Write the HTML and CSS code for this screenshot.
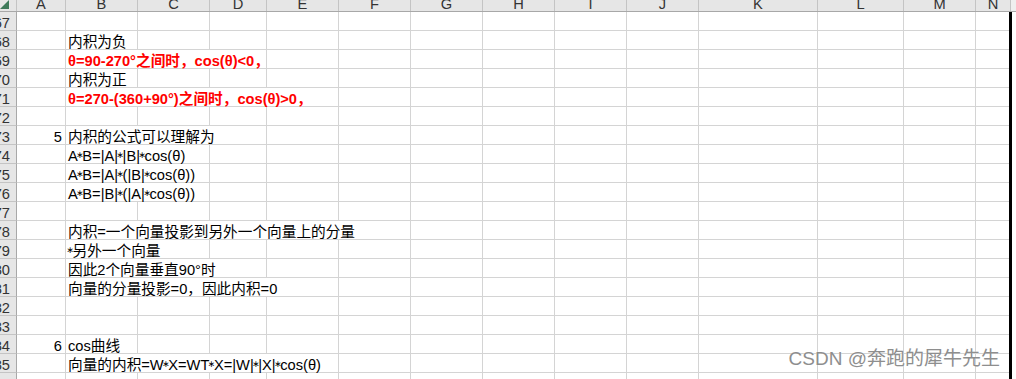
FILE: index.html
```html
<!DOCTYPE html>
<html>
<head>
    <title>Sheet1</title>
    <meta charset="utf-8">
    <link rel="stylesheet" href="styles.css">
</head>
<body>
    <div class="sheet">
        <!-- column header -->
        <div class="row head">
            <div class="corner"><svg width="9" height="9" viewBox="0 0 9 9"><polygon points="9,0 9,9 0,9" fill="#3f7a5a"/></svg></div>
            <div class="h">A</div><div class="h">B</div><div class="h">C</div><div class="h">D</div><div class="h">E</div><div class="h">F</div><div class="h">G</div>
            <div class="h">H</div><div class="h">I</div><div class="h">J</div><div class="h">K</div><div class="h">L</div><div class="h">M</div><div class="h">N</div>
            <div class="htail"></div>
        </div>

        <div class="row"><div class="rh">67</div><div class="c"></div><div class="c"></div><div class="c"></div><div class="c"></div><div class="c"></div><div class="c"></div><div class="c"></div><div class="c"></div><div class="c"></div><div class="c"></div><div class="c"></div><div class="c"></div><div class="c"></div><div class="c last"></div><div class="bar"></div><div class="tail"></div></div>
        <div class="row"><div class="rh">68</div><div class="c"></div><div class="c txt">内积为负</div><div class="c"></div><div class="c"></div><div class="c"></div><div class="c"></div><div class="c"></div><div class="c"></div><div class="c"></div><div class="c"></div><div class="c"></div><div class="c"></div><div class="c"></div><div class="c last"></div><div class="bar"></div><div class="tail"></div></div>
        <div class="row"><div class="rh">69</div><div class="c"></div><div class="c txt red s3">θ=90-270°之间时，cos(θ)&lt;0，</div><div class="c"></div><div class="c"></div><div class="c"></div><div class="c"></div><div class="c"></div><div class="c"></div><div class="c"></div><div class="c"></div><div class="c"></div><div class="c last"></div><div class="bar"></div><div class="tail"></div></div>
        <div class="row"><div class="rh">70</div><div class="c"></div><div class="c txt">内积为正</div><div class="c"></div><div class="c"></div><div class="c"></div><div class="c"></div><div class="c"></div><div class="c"></div><div class="c"></div><div class="c"></div><div class="c"></div><div class="c"></div><div class="c"></div><div class="c last"></div><div class="bar"></div><div class="tail"></div></div>
        <div class="row"><div class="rh">71</div><div class="c"></div><div class="c txt red s4">θ=270-(360+90°)之间时，cos(θ)&gt;0，</div><div class="c"></div><div class="c"></div><div class="c"></div><div class="c"></div><div class="c"></div><div class="c"></div><div class="c"></div><div class="c"></div><div class="c last"></div><div class="bar"></div><div class="tail"></div></div>
        <div class="row"><div class="rh">72</div><div class="c"></div><div class="c"></div><div class="c"></div><div class="c"></div><div class="c"></div><div class="c"></div><div class="c"></div><div class="c"></div><div class="c"></div><div class="c"></div><div class="c"></div><div class="c"></div><div class="c"></div><div class="c last"></div><div class="bar"></div><div class="tail"></div></div>
        <div class="row"><div class="rh">73</div><div class="c num">5</div><div class="c txt s3">内积的公式可以理解为</div><div class="c"></div><div class="c"></div><div class="c"></div><div class="c"></div><div class="c"></div><div class="c"></div><div class="c"></div><div class="c"></div><div class="c"></div><div class="c last"></div><div class="bar"></div><div class="tail"></div></div>
        <div class="row"><div class="rh">74</div><div class="c"></div><div class="c txt s2">A<span class="op">∗</span>B=|A|<span class="op">∗</span>|B|<span class="op">∗</span>cos(θ)</div><div class="c"></div><div class="c"></div><div class="c"></div><div class="c"></div><div class="c"></div><div class="c"></div><div class="c"></div><div class="c"></div><div class="c"></div><div class="c"></div><div class="c last"></div><div class="bar"></div><div class="tail"></div></div>
        <div class="row"><div class="rh">75</div><div class="c"></div><div class="c txt s2">A<span class="op">∗</span>B=|A|<span class="op">∗</span>(|B|<span class="op">∗</span>cos(θ))</div><div class="c"></div><div class="c"></div><div class="c"></div><div class="c"></div><div class="c"></div><div class="c"></div><div class="c"></div><div class="c"></div><div class="c"></div><div class="c"></div><div class="c last"></div><div class="bar"></div><div class="tail"></div></div>
        <div class="row"><div class="rh">76</div><div class="c"></div><div class="c txt s2">A<span class="op">∗</span>B=|B|<span class="op">∗</span>(|A|<span class="op">∗</span>cos(θ))</div><div class="c"></div><div class="c"></div><div class="c"></div><div class="c"></div><div class="c"></div><div class="c"></div><div class="c"></div><div class="c"></div><div class="c"></div><div class="c"></div><div class="c last"></div><div class="bar"></div><div class="tail"></div></div>
        <div class="row"><div class="rh">77</div><div class="c"></div><div class="c"></div><div class="c"></div><div class="c"></div><div class="c"></div><div class="c"></div><div class="c"></div><div class="c"></div><div class="c"></div><div class="c"></div><div class="c"></div><div class="c"></div><div class="c"></div><div class="c last"></div><div class="bar"></div><div class="tail"></div></div>
        <div class="row"><div class="rh">78</div><div class="c"></div><div class="c txt s5">内积=一个向量投影到另外一个向量上的分量</div><div class="c"></div><div class="c"></div><div class="c"></div><div class="c"></div><div class="c"></div><div class="c"></div><div class="c"></div><div class="c last"></div><div class="bar"></div><div class="tail"></div></div>
        <div class="row"><div class="rh">79</div><div class="c"></div><div class="c txt s2"><span class="op">∗</span>另外一个向量</div><div class="c"></div><div class="c"></div><div class="c"></div><div class="c"></div><div class="c"></div><div class="c"></div><div class="c"></div><div class="c"></div><div class="c"></div><div class="c"></div><div class="c last"></div><div class="bar"></div><div class="tail"></div></div>
        <div class="row"><div class="rh">80</div><div class="c"></div><div class="c txt s3">因此2个向量垂直90°时</div><div class="c"></div><div class="c"></div><div class="c"></div><div class="c"></div><div class="c"></div><div class="c"></div><div class="c"></div><div class="c"></div><div class="c"></div><div class="c last"></div><div class="bar"></div><div class="tail"></div></div>
        <div class="row"><div class="rh">81</div><div class="c"></div><div class="c txt s4">向量的分量投影=0，因此内积=0</div><div class="c"></div><div class="c"></div><div class="c"></div><div class="c"></div><div class="c"></div><div class="c"></div><div class="c"></div><div class="c"></div><div class="c last"></div><div class="bar"></div><div class="tail"></div></div>
        <div class="row"><div class="rh">82</div><div class="c"></div><div class="c"></div><div class="c"></div><div class="c"></div><div class="c"></div><div class="c"></div><div class="c"></div><div class="c"></div><div class="c"></div><div class="c"></div><div class="c"></div><div class="c"></div><div class="c"></div><div class="c last"></div><div class="bar"></div><div class="tail"></div></div>
        <div class="row"><div class="rh">83</div><div class="c"></div><div class="c"></div><div class="c"></div><div class="c"></div><div class="c"></div><div class="c"></div><div class="c"></div><div class="c"></div><div class="c"></div><div class="c"></div><div class="c"></div><div class="c"></div><div class="c"></div><div class="c last"></div><div class="bar"></div><div class="tail"></div></div>
        <div class="row"><div class="rh">84</div><div class="c num">6</div><div class="c txt">cos曲线</div><div class="c"></div><div class="c"></div><div class="c"></div><div class="c"></div><div class="c"></div><div class="c"></div><div class="c"></div><div class="c"></div><div class="c"></div><div class="c"></div><div class="c"></div><div class="c last"></div><div class="bar"></div><div class="tail"></div></div>
        <div class="row"><div class="rh">85</div><div class="c"></div><div class="c txt s4">向量的内积=W<span class="op">∗</span>X=WT<span class="op">∗</span>X=|W|<span class="op">∗</span>|X|<span class="op">∗</span>cos(θ)</div><div class="c"></div><div class="c"></div><div class="c"></div><div class="c"></div><div class="c"></div><div class="c"></div><div class="c"></div><div class="c"></div><div class="c last"></div><div class="bar"></div><div class="tail"></div></div>
        <div class="row"><div class="rh">86</div><div class="c"></div><div class="c"></div><div class="c"></div><div class="c"></div><div class="c"></div><div class="c"></div><div class="c"></div><div class="c"></div><div class="c"></div><div class="c"></div><div class="c"></div><div class="c"></div><div class="c"></div><div class="c last"></div><div class="bar"></div><div class="tail"></div></div>
    </div>

    <div class="mark">CSDN @奔跑的犀牛先生</div>
</body>
</html>
```

FILE: styles.css
```css
/* Base styles */
* {
    box-sizing: border-box;
    margin: 0;
    padding: 0;
}

body {
    width: 1016px;
    height: 379px;
    overflow: hidden;
    background: #fff;
    color: #000;
    font-family: "Liberation Sans", "Noto Sans CJK SC", sans-serif;
    font-size: 14.67px;
    position: relative;
}

.sheet {
    display: flex;
    flex-direction: column;
}

/* One grid row per sheet row, tracks = sheet columns */
.row {
    display: grid;
    grid-template-columns: 17px 49px 72px 72px 57px 72px 72px 72px 72px 72px 72px 119px 86px 72px 33px 3px 4px;
    height: 19px;
    flex: none;
}

/* Column header */
.head {
    height: 12px;
    grid-template-columns: 17px 49px 72px 72px 57px 72px 72px 72px 72px 72px 72px 119px 86px 72px 35px 5px;
    background: #e6e6e6;
    border-bottom: 1px solid #a8a8a8;
}

.corner {
    border-right: 1px solid #c4c4c4;
    display: flex;
    align-items: flex-end;
    justify-content: flex-start;
    padding-bottom: 2px;
}

.corner svg {
    display: block;
}

.h {
    border-right: 1px solid #c4c4c4;
    text-align: center;
    line-height: 9px;
    overflow: hidden;
    color: #333;
}

.htail {
    background: #efefef;
}

/* Row header */
.rh {
    background: #e6e6e6;
    border-right: 1px solid #a8a8a8;
    border-bottom: 1px solid #c4c4c4;
    display: flex;
    justify-content: flex-end;
    align-items: flex-end;
    overflow: hidden;
    padding-right: 6px;
    line-height: 14px;
    color: #333;
}

/* Cells */
.c {
    border-right: 1px solid #d4d4d4;
    border-bottom: 1px solid #d4d4d4;
    display: flex;
    align-items: flex-end;
    line-height: 14px;
    white-space: nowrap;
    background: #fff;
}

.c.last {
    border-right: none;
}

/* text spills over the neighbour cells like in Excel */
.txt {
    padding-left: 2px;
    position: relative;
    z-index: 1;
    background: transparent;
}

.txt > span,
.txt {
    white-space: pre;
}

/* small centred multiply sign */
.op {
    font-family: "DejaVu Sans", sans-serif;
    font-size: 9px;
    margin: 0 -1.5px;
    position: relative;
    top: -1px;
}

.num {
    justify-content: flex-end;
    padding-right: 3px;
}

.red {
    color: #f00;
    font-weight: bold;
}

.s2 { grid-column: span 2; }
.s3 { grid-column: span 3; }
.s4 { grid-column: span 4; }
.s5 { grid-column: span 5; }

.bar {
    background: #000;
}

.tail {
    background: #fff;
}

/* CSDN watermark */
.mark {
    position: absolute;
    right: 16px;
    top: 349px;
    font-size: 19px;
    line-height: 19px;
    color: #8e8e8e;
    text-shadow: 0 0 1px #fff;
    white-space: nowrap;
}
```
